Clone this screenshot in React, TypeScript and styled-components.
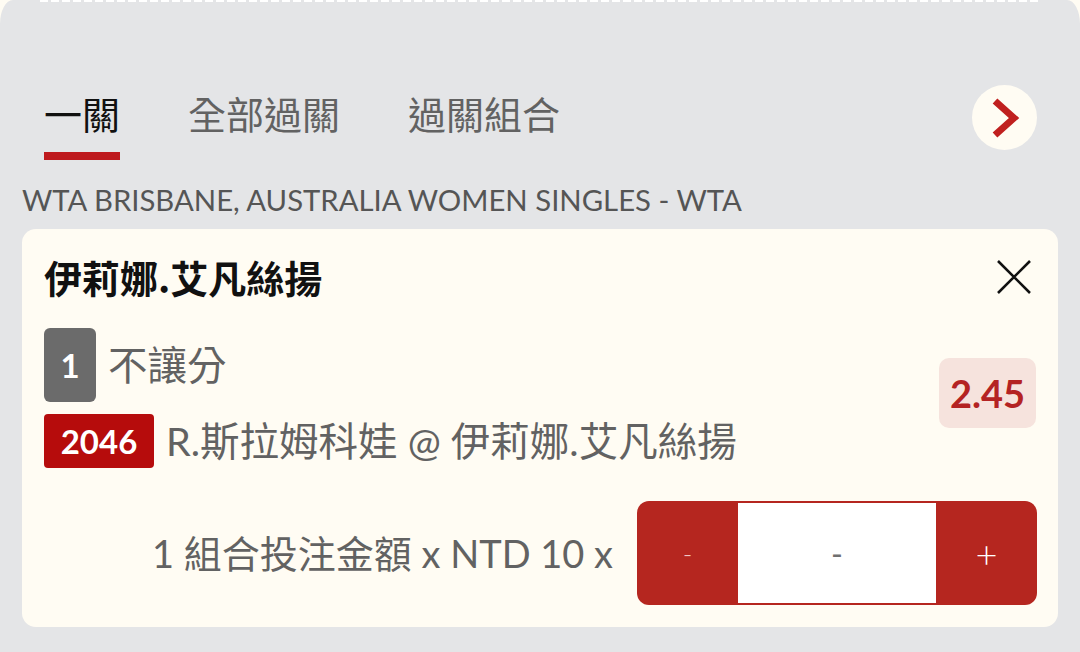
import React from "react";
import styled, { createGlobalStyle } from "styled-components";

const Global = createGlobalStyle`
  html, body { margin: 0; padding: 0; background: #fffcf3; }
  body { font-family: "Lato", "Noto Sans CJK TC", sans-serif; }
  * { box-sizing: border-box; }
`;

const Page = styled.div`
  width: 1080px;
  height: 652px;
  background: #fffcf3;
  overflow: hidden;
`;

const Sheet = styled.div`
  position: relative;
  height: 652px;
  background: #e4e5e7;
  border-top-left-radius: 13px 24px;
  border-top-right-radius: 13px 24px;
  padding: 85px 22px 0 22px;
  &::before {
    content: "";
    position: absolute;
    top: 0;
    left: 40px;
    right: 40px;
    height: 2px;
    background: repeating-linear-gradient(90deg, #ffffff 0 8px, transparent 8px 11px);
  }
`;

const Header = styled.div`
  display: flex;
  align-items: flex-start;
  justify-content: space-between;
  padding-left: 22px;
  padding-right: 21px;
`;

const Tabs = styled.div`
  display: flex;
  gap: 68px;
  margin-top: 5px;
`;

const Tab = styled.div<{ $active?: boolean }>`
  font-family: "Noto Sans CJK TC", sans-serif;
  font-size: 38px;
  line-height: 46px;
  color: ${(p) => (p.$active ? "#111111" : "#626262")};
  padding-bottom: 16px;
  border-bottom: 8px solid ${(p) => (p.$active ? "#be1a1e" : "transparent")};
`;

const NextButton = styled.div`
  width: 65px;
  height: 65px;
  border-radius: 50%;
  background: #fffcf3;
  display: flex;
  align-items: center;
  justify-content: center;
`;

const League = styled.div`
  margin-top: 23px;
  font-family: "Lato", sans-serif;
  font-size: 29.3px;
  line-height: 34px;
  color: #555555;
`;

const Card = styled.div`
  margin-top: 12px;
  background: #fffcf3;
  border-radius: 14px;
  padding: 25px 21px 22px 22px;
  display: flex;
  flex-direction: column;
`;

const TitleRow = styled.div`
  display: flex;
  align-items: center;
  justify-content: space-between;
`;

const Title = styled.div`
  font-family: "Noto Sans CJK TC", sans-serif;
  font-weight: 700;
  font-size: 38px;
  line-height: 46px;
  color: #111111;
`;

const CloseIcon = styled.div`
  width: 44px;
  height: 44px;
  display: flex;
  align-items: center;
  justify-content: center;
  margin-right: 1px;
`;

const Body = styled.div`
  margin-top: 28px;
  display: flex;
  align-items: center;
  justify-content: space-between;
`;

const Lines = styled.div`
  display: flex;
  flex-direction: column;
  gap: 12px;
`;

const Line = styled.div`
  display: flex;
  align-items: center;
  gap: 12px;
`;

const Badge = styled.div<{ $tone: "gray" | "red" }>`
  display: flex;
  align-items: center;
  justify-content: center;
  font-family: "Lato", sans-serif;
  font-weight: 700;
  font-size: 33px;
  color: #ffffff;
  background: ${(p) => (p.$tone === "gray" ? "#6b6b6b" : "#b60c0c")};
  border-radius: ${(p) => (p.$tone === "gray" ? "6px" : "4px")};
  height: ${(p) => (p.$tone === "gray" ? "74px" : "54px")};
  width: ${(p) => (p.$tone === "gray" ? "52px" : "110px")};
`;

const LineText = styled.div`
  font-family: "Lato", "Noto Sans CJK TC", sans-serif;
  font-size: 39.5px;
  line-height: 46px;
  color: #626262;
`;

const Odds = styled.div`
  width: 97px;
  height: 70px;
  border-radius: 10px;
  background: #f6e3dd;
  color: #b42323;
  font-family: "Lato", sans-serif;
  font-weight: 700;
  font-size: 38px;
  display: flex;
  align-items: center;
  justify-content: center;
  margin-top: -10px;
  margin-right: 1px;
`;

const StakeRow = styled.div`
  margin-top: 33px;
  display: flex;
  align-items: center;
  justify-content: flex-end;
  gap: 24px;
`;

const StakeText = styled.div`
  font-family: "Lato", "Noto Sans CJK TC", sans-serif;
  font-size: 38px;
  color: #626262;
  line-height: 46px;
`;

const Stepper = styled.div`
  width: 400px;
  height: 104px;
  border-radius: 12px;
  background: #b5261f;
  display: flex;
  overflow: hidden;
`;

const StepButton = styled.div<{ $dim?: boolean }>`
  width: 101px;
  display: flex;
  align-items: center;
  justify-content: center;
  font-family: "Lato", sans-serif;
  font-size: ${(p) => (p.$dim ? "26px" : "38px")};
  font-weight: 300;
  color: ${(p) => (p.$dim ? "#f1c6c4" : "#ffffff")};
`;

const StepValue = styled.div`
  flex: 1;
  margin: 2px 0;
  background: #ffffff;
  display: flex;
  align-items: center;
  justify-content: center;
  font-family: "Lato", sans-serif;
  font-size: 32px;
  color: #707070;
`;

export default function App() {
  return (
    <Page>
      <Global />
      <Sheet>
        <Header>
          <Tabs>
            <Tab $active>一關</Tab>
            <Tab>全部過關</Tab>
            <Tab>過關組合</Tab>
          </Tabs>
          <NextButton>
            <svg width="30" height="40" viewBox="0 0 30 40">
              <polyline
                points="5,3 24,20 5,37"
                fill="none"
                stroke="#c0201f"
                strokeWidth="7"
                strokeLinejoin="miter"
              />
            </svg>
          </NextButton>
        </Header>
        <League>WTA BRISBANE, AUSTRALIA WOMEN SINGLES - WTA</League>
        <Card>
          <TitleRow>
            <Title>伊莉娜.艾凡絲揚</Title>
            <CloseIcon>
              <svg width="36" height="36" viewBox="0 0 36 36">
                <path d="M2 2 L34 34 M34 2 L2 34" stroke="#111" strokeWidth="2.6" fill="none" />
              </svg>
            </CloseIcon>
          </TitleRow>
          <Body>
            <Lines>
              <Line>
                <Badge $tone="gray">1</Badge>
                <LineText>不讓分</LineText>
              </Line>
              <Line>
                <Badge $tone="red">2046</Badge>
                <LineText>R.斯拉姆科娃 @ 伊莉娜.艾凡絲揚</LineText>
              </Line>
            </Lines>
            <Odds>2.45</Odds>
          </Body>
          <StakeRow>
            <StakeText>1 組合投注金額 x NTD 10 x</StakeText>
            <Stepper>
              <StepButton $dim>-</StepButton>
              <StepValue>-</StepValue>
              <StepButton>+</StepButton>
            </Stepper>
          </StakeRow>
        </Card>
      </Sheet>
    </Page>
  );
}
